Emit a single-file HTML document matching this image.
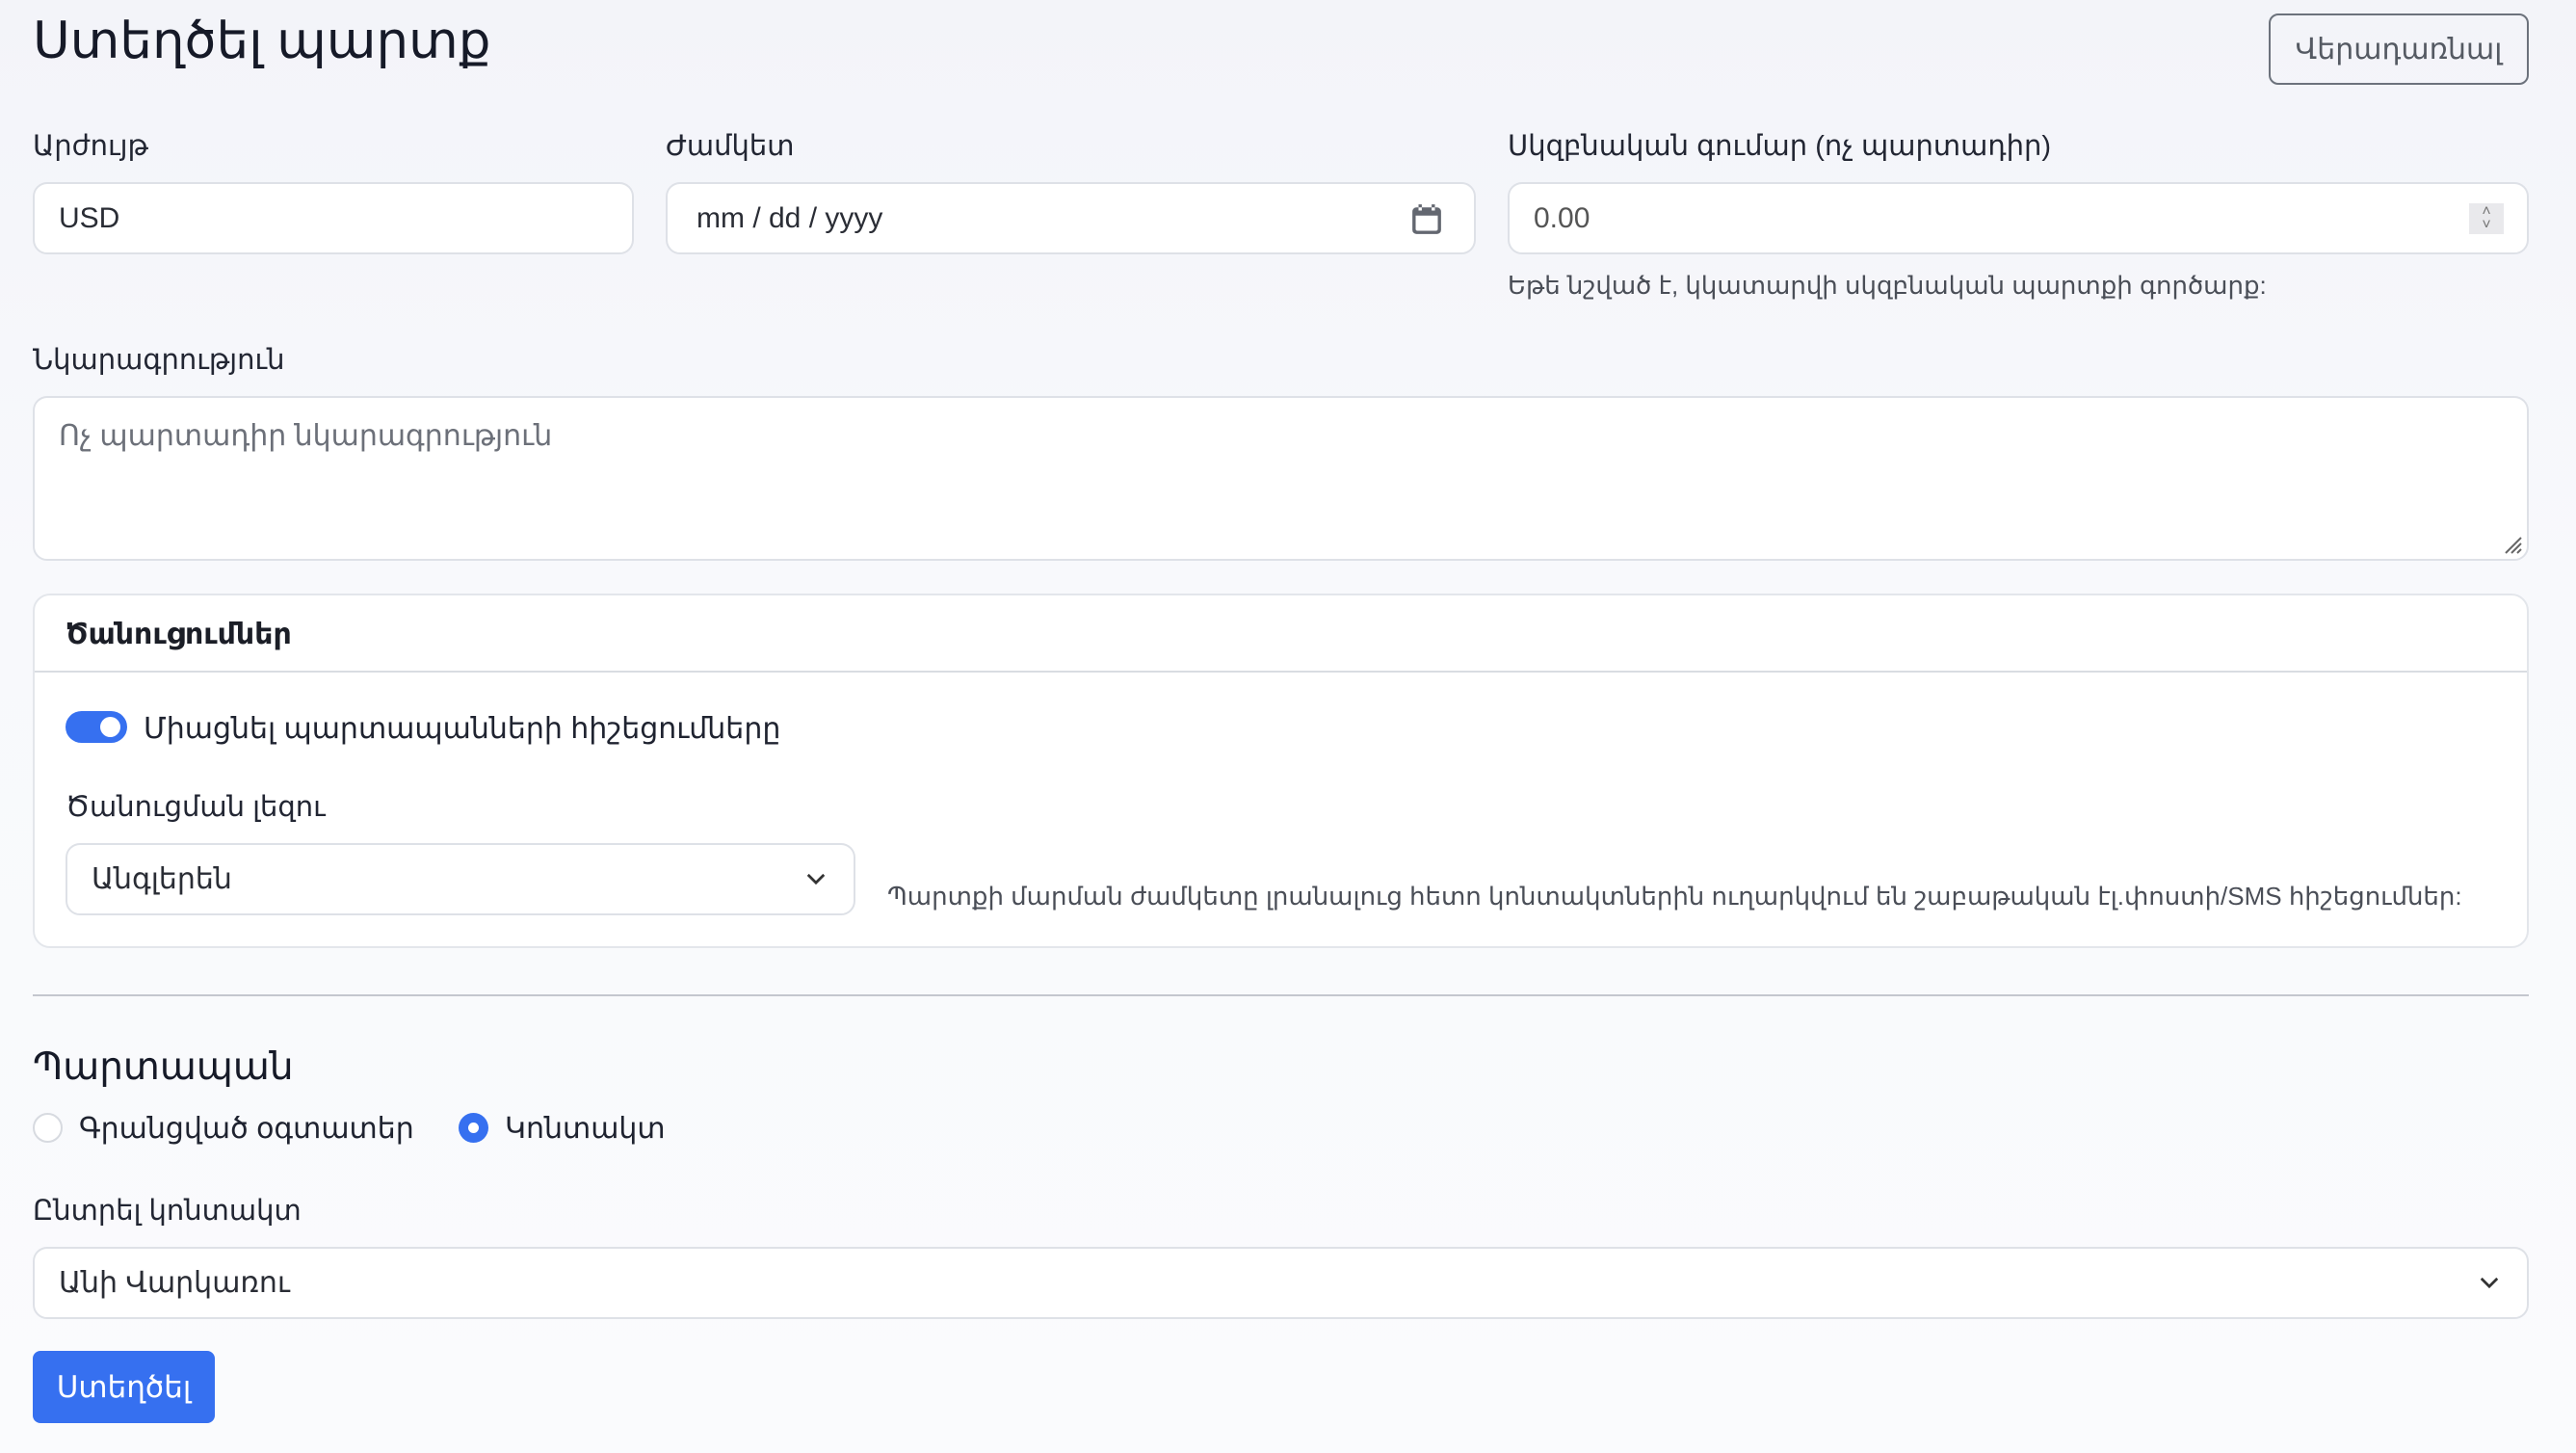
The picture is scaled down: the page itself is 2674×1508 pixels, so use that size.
<!DOCTYPE html>
<html><head><meta charset="utf-8">
<style>
*{box-sizing:border-box;margin:0;padding:0}
body{width:2674px;height:1508px;background:linear-gradient(#f3f4f9,#f8f9fc 40%,#fafbfd);font-family:"Liberation Sans","DejaVu Sans",sans-serif;color:#1f2330;position:relative;overflow:hidden}
.a{position:absolute}
.lbl{font-size:29px;color:#222633;white-space:nowrap}
.inp{background:#fff;border:2px solid #dee1e7;border-radius:15px;font-size:30px;display:flex;align-items:center;padding-left:25px;color:#2a2d35}
.help{font-size:25px;color:#4a4e57;white-space:nowrap}
</style></head><body>
<div class="a" style="left:34px;top:12px;font-size:53px;color:#161a28">Ստեղծել պարտք</div>
<div class="a" style="left:2355px;top:14px;width:270px;height:74px;border:2px solid #6c727c;border-radius:10px;font-size:30px;color:#555a63;display:flex;align-items:center;justify-content:center">Վերադառնալ</div>

<div class="a lbl" style="left:34px;top:134px">Արժույթ</div>
<div class="a lbl" style="left:691px;top:134px">Ժամկետ</div>
<div class="a lbl" style="left:1565px;top:134px">Սկզբնական գումար (ոչ պարտադիր)</div>

<div class="a inp" style="left:34px;top:189px;width:624px;height:75px">USD</div>
<div class="a inp" style="left:691px;top:189px;width:841px;height:75px;padding-left:30px">mm / dd / yyyy
<svg class="a" style="right:32px;top:20px" width="34" height="34" viewBox="0 0 16 16"><path d="M3 2h10a2 2 0 0 1 2 2v9a2 2 0 0 1-2 2H3a2 2 0 0 1-2-2V4a2 2 0 0 1 2-2z M2.6 6v6.5a.9.9 0 0 0 .9.9h9a.9.9 0 0 0 .9-.9V6z M4 0.5h1.6v3H4z M10.4 0.5H12v3h-1.6z" fill="#636770" fill-rule="evenodd"/></svg></div>
<div class="a inp" style="left:1565px;top:189px;width:1060px;height:75px;color:#555">0.00
<div class="a" style="right:24px;top:20px;width:36px;height:32px;background:#e9e9ec;font-size:16px;color:#777;line-height:14px;text-align:center;padding-top:2px">˄<br>˅</div></div>
<div class="a help" style="left:1565px;top:281px;font-size:26px">Եթե նշված է, կկատարվի սկզբնական պարտքի գործարք:</div>

<div class="a lbl" style="left:34px;top:356px">Նկարագրություն</div>
<div class="a inp" style="left:34px;top:411px;width:2591px;height:171px;align-items:flex-start;padding-top:22px;color:#6c7079">Ոչ պարտադիր նկարագրություն
<svg class="a" style="right:4px;bottom:4px" width="22" height="22"><path d="M20 4L4 20M20 10L10 20M20 16L16 20" stroke="#666" stroke-width="2"/></svg></div>

<div class="a" style="left:34px;top:616px;width:2591px;height:368px;background:#fff;border:2px solid #e3e6eb;border-radius:18px"></div>
<div class="a" style="left:36px;top:696px;width:2587px;height:2px;background:#d9dce2"></div>
<div class="a" style="left:68px;top:641px;font-size:30px;font-weight:bold;color:#1b1e27">Ծանուցումներ</div>
<div class="a" style="left:68px;top:738px;width:64px;height:33px;border-radius:17px;background:#3670f0"></div>
<div class="a" style="left:104px;top:744px;width:21px;height:21px;border-radius:50%;background:#fff"></div>
<div class="a" style="left:149px;top:739px;font-size:30px;color:#1f2330">Միացնել պարտապանների հիշեցումները</div>
<div class="a lbl" style="left:68px;top:820px">Ծանուցման լեզու</div>
<div class="a inp" style="left:68px;top:875px;width:820px;height:75px">Անգլերեն
<svg class="a" style="right:28px;top:27px" width="22" height="16" viewBox="0 0 16 10"><path d="M2 2l6 6 6-6" stroke="#333" stroke-width="2" fill="none"/></svg></div>
<div class="a help" style="left:921px;top:915px;font-size:26px">Պարտքի մարման ժամկետը լրանալուց հետո կոնտակտներին ուղարկվում են շաբաթական էլ.փոստի/SMS հիշեցումներ:</div>

<div class="a" style="left:34px;top:1032px;width:2591px;height:2px;background:#c4c7ce"></div>
<div class="a" style="left:34px;top:1085px;font-size:39px;color:#161a28">Պարտապան</div>
<div class="a" style="left:34px;top:1155px;width:31px;height:31px;border-radius:50%;border:2px solid #d7dae0;background:#fff"></div>
<div class="a" style="left:82px;top:1154px;font-size:30px">Գրանցված օգտատեր</div>
<div class="a" style="left:476px;top:1155px;width:31px;height:31px;border-radius:50%;background:#3670f0"></div>
<div class="a" style="left:486px;top:1165px;width:11px;height:11px;border-radius:50%;background:#fff"></div>
<div class="a" style="left:524px;top:1154px;font-size:30px">Կոնտակտ</div>
<div class="a lbl" style="left:34px;top:1239px">Ընտրել կոնտակտ</div>
<div class="a inp" style="left:34px;top:1294px;width:2591px;height:75px">Անի Վարկառու
<svg class="a" style="right:28px;top:27px" width="22" height="16" viewBox="0 0 16 10"><path d="M2 2l6 6 6-6" stroke="#333" stroke-width="2" fill="none"/></svg></div>
<div class="a" style="left:34px;top:1402px;width:189px;height:75px;background:#3670f0;border-radius:8px;color:#fff;font-size:31px;display:flex;align-items:center;justify-content:center">Ստեղծել</div>
</body></html>
